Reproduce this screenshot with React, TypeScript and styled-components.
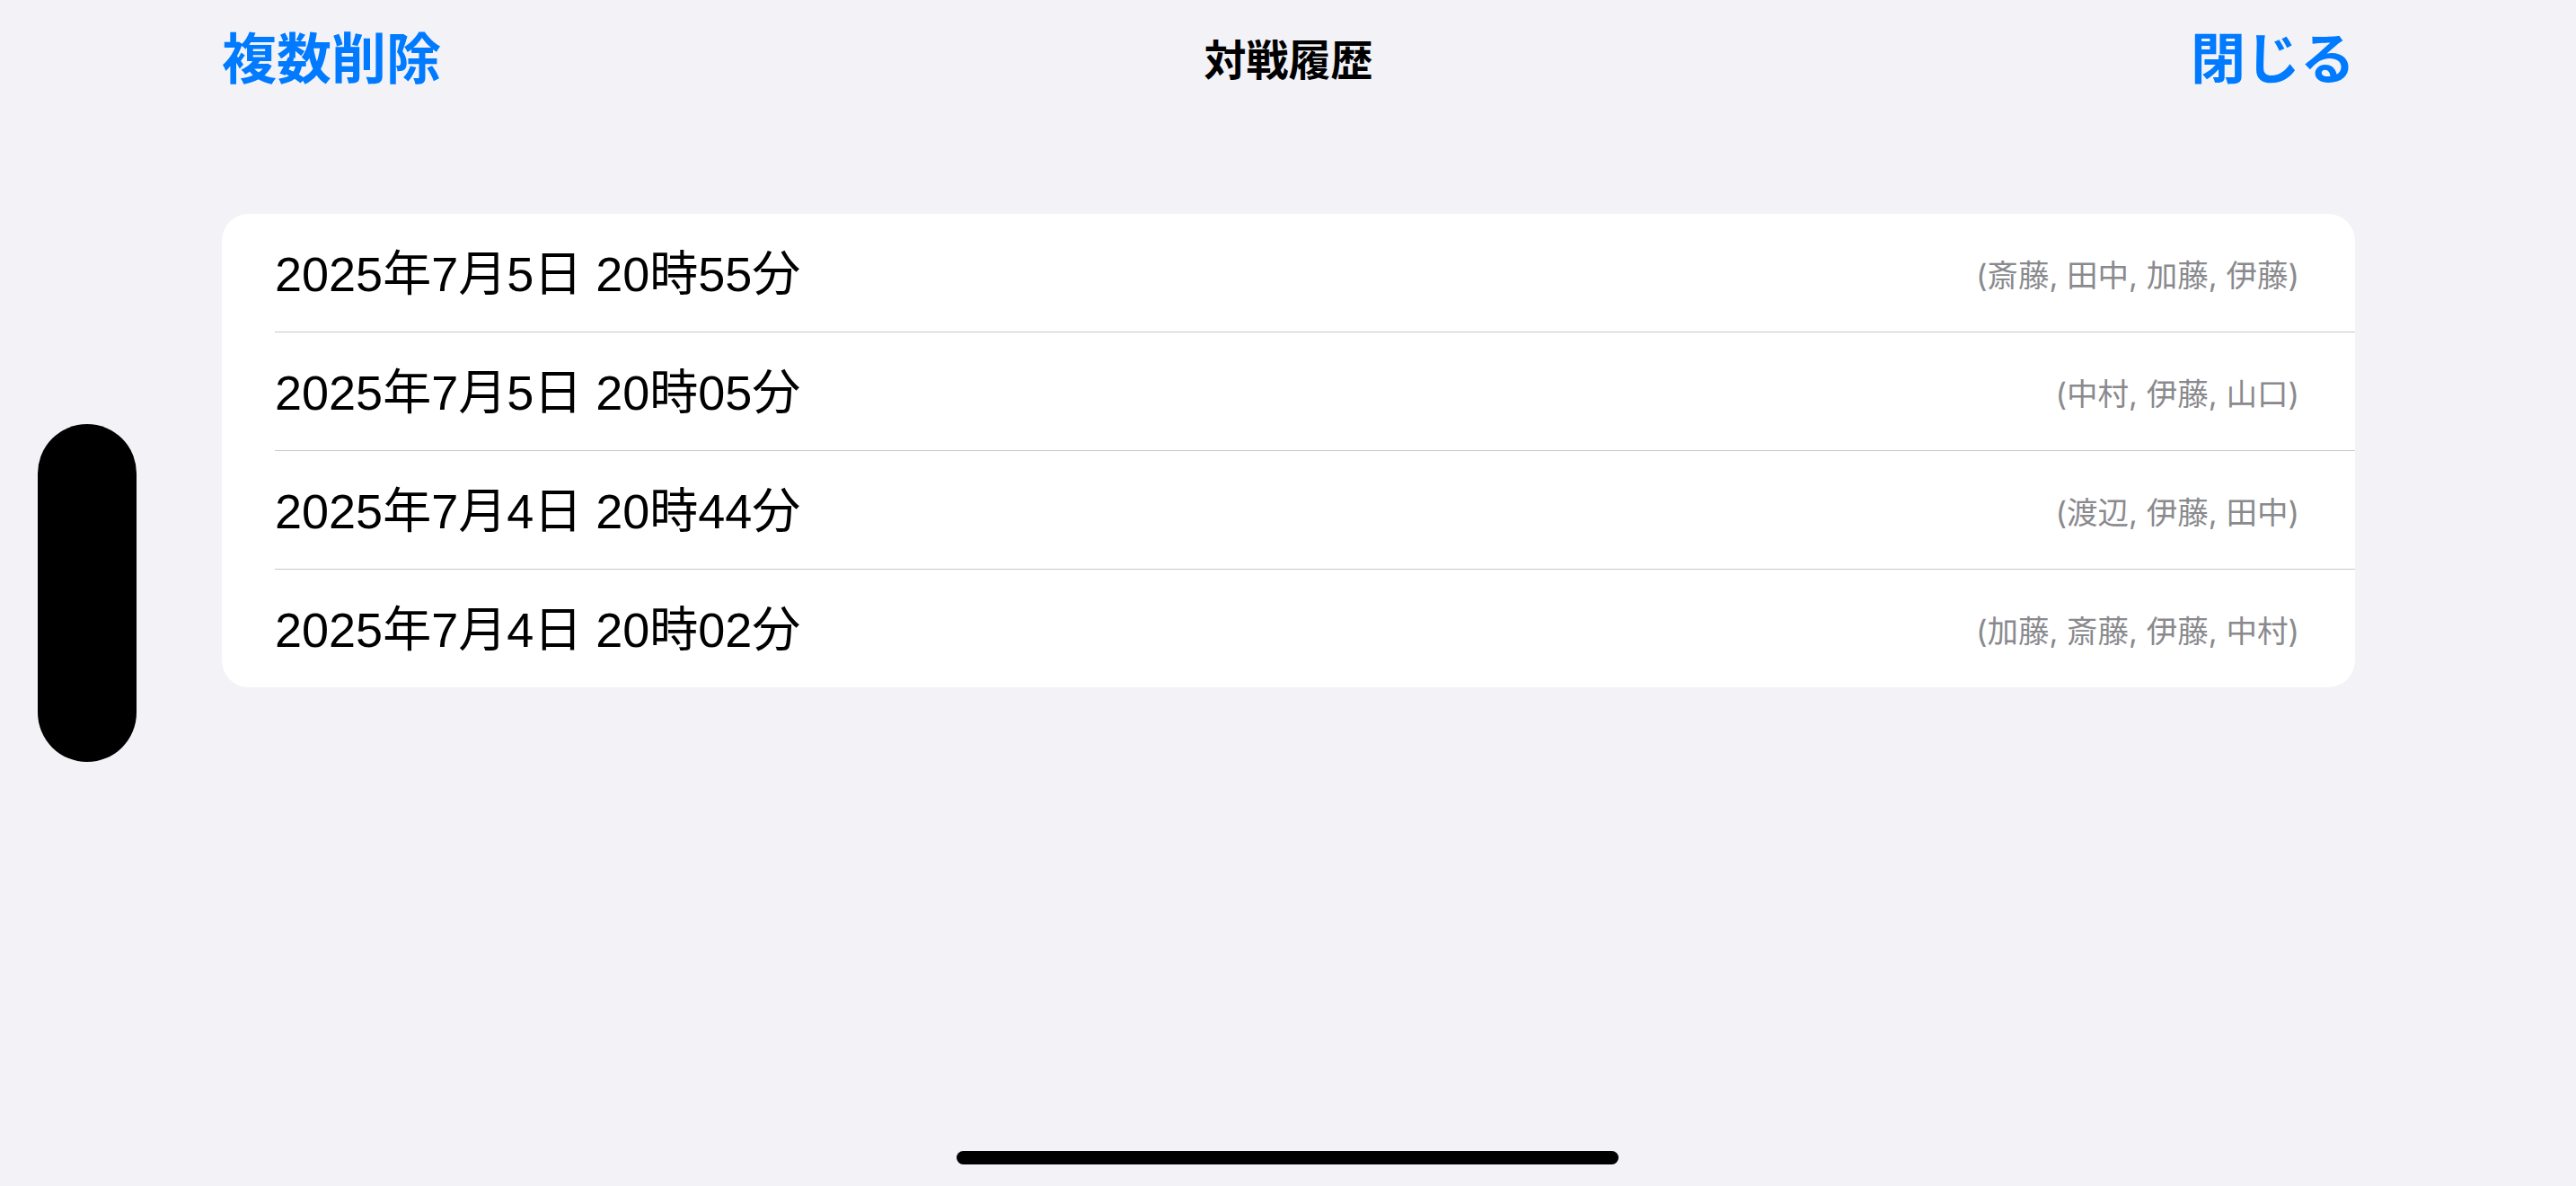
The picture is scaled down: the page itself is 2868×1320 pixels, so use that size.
import styled, { createGlobalStyle } from "styled-components";

type Match = {
  date: string;
  players: string[];
};

const MATCHES: Match[] = [
  { date: "2025年7月5日 20時55分", players: ["斎藤", "田中", "加藤", "伊藤"] },
  { date: "2025年7月5日 20時05分", players: ["中村", "伊藤", "山口"] },
  { date: "2025年7月4日 20時44分", players: ["渡辺", "伊藤", "田中"] },
  { date: "2025年7月4日 20時02分", players: ["加藤", "斎藤", "伊藤", "中村"] },
];

const FONT = `Inter, "Noto Sans CJK JP", "Noto Sans", sans-serif`;
const DATE_FONT = `"Liberation Sans", "Noto Sans CJK JP", sans-serif`;

const GlobalStyle = createGlobalStyle`
  html, body {
    margin: 0;
    padding: 0;
    background: #f2f2f7;
  }
  body {
    font-family: ${FONT};
    -webkit-font-smoothing: antialiased;
  }
`;

const App = () => {
  return (
    <>
      <GlobalStyle />
      <StyledScreen>
        <StyledContent>
          <StyledNavBar>
            <StyledNavButton $align="left">複数削除</StyledNavButton>
            <StyledTitle>対戦履歴</StyledTitle>
            <StyledNavButton $align="right">閉じる</StyledNavButton>
          </StyledNavBar>
          <StyledList>
            {MATCHES.map((m) => (
              <StyledRow key={m.date}>
                <StyledDate>{m.date}</StyledDate>
                <StyledPlayers>({m.players.join(", ")})</StyledPlayers>
              </StyledRow>
            ))}
          </StyledList>
        </StyledContent>
        <StyledIsland />
        <StyledHomeIndicator />
      </StyledScreen>
    </>
  );
};

const StyledScreen = styled.div`
  position: relative;
  width: 2868px;
  height: 1320px;
  background: #f2f2f7;
  overflow: hidden;
`;

const StyledContent = styled.div`
  width: 2375px;
  margin-left: 247px;
  display: flex;
  flex-direction: column;
  gap: 106px;
`;

const StyledNavBar = styled.header`
  height: 132px;
  display: grid;
  grid-template-columns: 1fr auto 1fr;
  align-items: center;
`;

const StyledNavButton = styled.button<{ $align: "left" | "right" }>`
  justify-self: ${({ $align }) => ($align === "left" ? "start" : "end")};
  padding: 0;
  margin: 0;
  border: none;
  background: none;
  font-family: ${FONT};
  font-size: 61px;
  line-height: 1;
  font-weight: 700;
  color: #007aff;
  cursor: pointer;
`;

const StyledTitle = styled.h1`
  margin: 0;
  font-size: 47px;
  line-height: 1;
  font-weight: 700;
  color: #000;
`;

const StyledList = styled.ul`
  list-style: none;
  margin: 0;
  padding: 0;
  background: #fff;
  border-radius: 30px;
  overflow: hidden;
`;

const StyledRow = styled.li`
  height: 131px;
  margin-left: 59px;
  padding-right: 62px;
  display: flex;
  align-items: center;
  justify-content: space-between;
  border-bottom: 1px solid #c8c8cc;
  &:last-child {
    border-bottom: none;
  }
`;

const StyledDate = styled.span`
  padding-bottom: 6px;
  font-family: ${DATE_FONT};
  font-size: 54px;
  color: #000;
  white-space: nowrap;
`;

const StyledPlayers = styled.span`
  font-size: 34.5px;
  color: #8a8a8e;
  white-space: nowrap;
`;

const StyledIsland = styled.div`
  position: absolute;
  left: 42px;
  top: 472px;
  width: 110px;
  height: 376px;
  border-radius: 55px;
  background: #000;
`;

const StyledHomeIndicator = styled.div`
  position: absolute;
  left: 1065px;
  bottom: 24px;
  width: 737px;
  height: 15px;
  border-radius: 8px;
  background: #000;
`;

export default App;
